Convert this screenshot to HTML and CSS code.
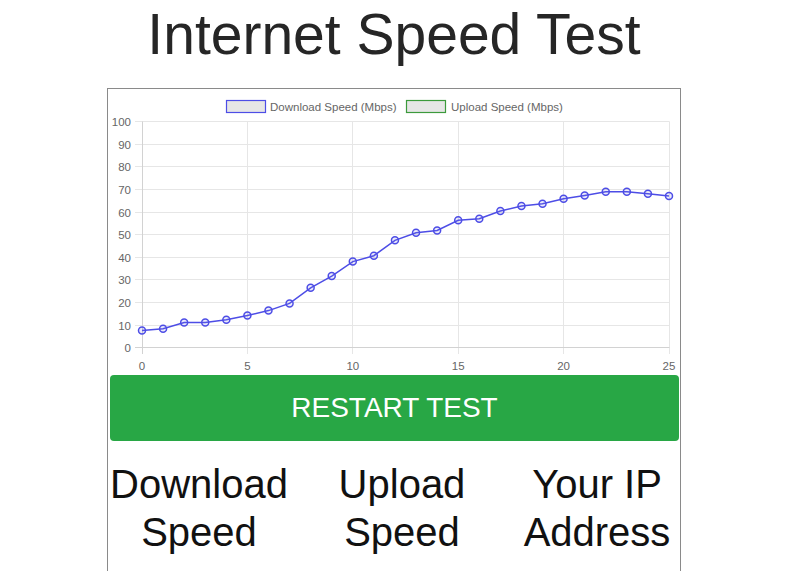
FILE: index.html
```html
<!DOCTYPE html>
<html lang="en">
<head>
<meta charset="utf-8">
<title>Internet Speed Test</title>
<link rel="stylesheet" href="styles.css">
</head>
<body>
<div class="page">
  <h1 class="title">Internet Speed Test</h1>
  <div class="panel">
    <svg class="chart" width="572" height="286" viewBox="0 0 572 286" xmlns="http://www.w3.org/2000/svg">
      <g class="legend">
        <rect x="118.5" y="11.5" width="39" height="12" fill="#e6e6e6" stroke="#4d4de6" stroke-width="1.2"/>
        <text x="162" y="21.5">Download Speed (Mbps)</text>
        <rect x="298.5" y="11.5" width="39" height="12" fill="#e6e6e6" stroke="#3c9a3c" stroke-width="1.2"/>
        <text x="343" y="21.5">Upload Speed (Mbps)</text>
      </g>
      <g stroke="#e6e6e6" stroke-width="1">
        <line x1="27" y1="32.5" x2="561.5" y2="32.5"/>
        <line x1="27" y1="55.5" x2="561.5" y2="55.5"/>
        <line x1="27" y1="77.5" x2="561.5" y2="77.5"/>
        <line x1="27" y1="100.5" x2="561.5" y2="100.5"/>
        <line x1="27" y1="123.5" x2="561.5" y2="123.5"/>
        <line x1="27" y1="145.5" x2="561.5" y2="145.5"/>
        <line x1="27" y1="168.5" x2="561.5" y2="168.5"/>
        <line x1="27" y1="190.5" x2="561.5" y2="190.5"/>
        <line x1="27" y1="213.5" x2="561.5" y2="213.5"/>
        <line x1="27" y1="236.5" x2="561.5" y2="236.5"/>
        <line x1="139.5" y1="32.5" x2="139.5" y2="265"/>
        <line x1="244.5" y1="32.5" x2="244.5" y2="265"/>
        <line x1="350.5" y1="32.5" x2="350.5" y2="265"/>
        <line x1="455.5" y1="32.5" x2="455.5" y2="265"/>
        <line x1="561.5" y1="32.5" x2="561.5" y2="265"/>
      </g>
      <g stroke="#d2d2d2" stroke-width="1">
        <line x1="27" y1="258.5" x2="561.5" y2="258.5"/>
        <line x1="34.5" y1="32.5" x2="34.5" y2="265"/>
      </g>
      <g class="ylabels" text-anchor="end">
        <text x="23" y="36.5">100</text>
        <text x="23" y="59.5">90</text>
        <text x="23" y="81.5">80</text>
        <text x="23" y="104.5">70</text>
        <text x="23" y="127.5">60</text>
        <text x="23" y="149.5">50</text>
        <text x="23" y="172.5">40</text>
        <text x="23" y="194.5">30</text>
        <text x="23" y="217.5">20</text>
        <text x="23" y="240.5">10</text>
        <text x="23" y="262.5">0</text>
      </g>
      <g class="xlabels" text-anchor="middle">
        <text x="34" y="280.5">0</text>
        <text x="139.4" y="280.5">5</text>
        <text x="244.8" y="280.5">10</text>
        <text x="350.2" y="280.5">15</text>
        <text x="455.6" y="280.5">20</text>
        <text x="561" y="280.5">25</text>
      </g>
      <polyline fill="none" stroke="#4d4de6" stroke-width="1.5" points="34,241.5 55.08,239.7 76.16,233.6 97.24,233.4 118.32,230.7 139.4,226.4 160.48,221.6 181.56,214.4 202.64,198.8 223.72,187.1 244.8,172.6 265.88,166.7 286.96,151.3 308.04,143.7 329.12,141.4 350.2,131.2 371.28,129.7 392.36,122 413.44,117 434.52,114.7 455.6,109.8 476.68,106.4 497.76,102.8 518.84,102.8 539.92,104.8 561,107.1"/>
      <g fill="rgba(120,120,230,0.15)" stroke="#4d4de6" stroke-width="1.5">
        <circle cx="34" cy="241.5" r="3.5"/>
        <circle cx="55.08" cy="239.7" r="3.5"/>
        <circle cx="76.16" cy="233.6" r="3.5"/>
        <circle cx="97.24" cy="233.4" r="3.5"/>
        <circle cx="118.32" cy="230.7" r="3.5"/>
        <circle cx="139.4" cy="226.4" r="3.5"/>
        <circle cx="160.48" cy="221.6" r="3.5"/>
        <circle cx="181.56" cy="214.4" r="3.5"/>
        <circle cx="202.64" cy="198.8" r="3.5"/>
        <circle cx="223.72" cy="187.1" r="3.5"/>
        <circle cx="244.8" cy="172.6" r="3.5"/>
        <circle cx="265.88" cy="166.7" r="3.5"/>
        <circle cx="286.96" cy="151.3" r="3.5"/>
        <circle cx="308.04" cy="143.7" r="3.5"/>
        <circle cx="329.12" cy="141.4" r="3.5"/>
        <circle cx="350.2" cy="131.2" r="3.5"/>
        <circle cx="371.28" cy="129.7" r="3.5"/>
        <circle cx="392.36" cy="122" r="3.5"/>
        <circle cx="413.44" cy="117" r="3.5"/>
        <circle cx="434.52" cy="114.7" r="3.5"/>
        <circle cx="455.6" cy="109.8" r="3.5"/>
        <circle cx="476.68" cy="106.4" r="3.5"/>
        <circle cx="497.76" cy="102.8" r="3.5"/>
        <circle cx="518.84" cy="102.8" r="3.5"/>
        <circle cx="539.92" cy="104.8" r="3.5"/>
        <circle cx="561" cy="107.1" r="3.5"/>
      </g>
    </svg>
    <button class="restart" type="button">RESTART TEST</button>
    <div class="stats">
      <div class="stat stat-download">Download Speed</div>
      <div class="stat stat-upload">Upload Speed</div>
      <div class="stat stat-ip">Your IP Address</div>
    </div>
  </div>
</div>
</body>
</html>
```

FILE: styles.css
```css
* {
  box-sizing: border-box;
}

html, body {
  margin: 0;
  padding: 0;
  background: #ffffff;
}

body {
  font-family: "Liberation Sans", Arial, sans-serif;
  color: #212529;
}

.page {
  width: 788px;
  text-align: center;
}

.title {
  margin: 0;
  padding-top: 0;
  font-size: 57px;
  font-weight: 400;
  line-height: 68px;
  color: #262626;
}

.panel {
  width: 574px;
  margin: 20px auto 0;
  border: 1px solid #8a8a8a;
  padding-bottom: 40px;
}

.chart {
  display: block;
}

.legend text {
  font-family: "Liberation Sans", Arial, sans-serif;
  font-size: 11.5px;
  fill: #666666;
}

.ylabels text,
.xlabels text {
  font-family: "Liberation Sans", Arial, sans-serif;
  font-size: 11.5px;
  fill: #666666;
}

.restart {
  display: block;
  width: 569px;
  height: 66px;
  margin: 0 0 0 2px;
  padding: 0;
  border: none;
  border-radius: 4px;
  background: #28a745;
  color: #ffffff;
  font-family: "Liberation Sans", Arial, sans-serif;
  font-size: 28px;
  line-height: 66px;
  cursor: pointer;
}

.stats {
  display: grid;
  grid-template-columns: 182px 224px 166px;
  margin-top: 19px;
}

.stat {
  font-size: 40px;
  line-height: 48px;
  text-align: center;
  color: #111111;
  padding: 0 2px;
}
```
